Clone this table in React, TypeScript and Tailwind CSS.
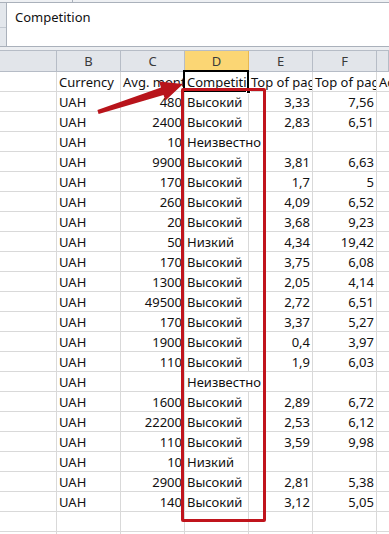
import React from 'react';

const rows: [string, string, string, string, string][] = [
  ['UAH', '480', 'Высокий', '3,33', '7,56'],
  ['UAH', '2400', 'Высокий', '2,83', '6,51'],
  ['UAH', '10', 'Неизвестно', '', ''],
  ['UAH', '9900', 'Высокий', '3,81', '6,63'],
  ['UAH', '170', 'Высокий', '1,7', '5'],
  ['UAH', '260', 'Высокий', '4,09', '6,52'],
  ['UAH', '20', 'Высокий', '3,68', '9,23'],
  ['UAH', '50', 'Низкий', '4,34', '19,42'],
  ['UAH', '170', 'Высокий', '3,75', '6,08'],
  ['UAH', '1300', 'Высокий', '2,05', '4,14'],
  ['UAH', '49500', 'Высокий', '2,72', '6,51'],
  ['UAH', '170', 'Высокий', '3,37', '5,27'],
  ['UAH', '1900', 'Высокий', '0,4', '3,97'],
  ['UAH', '110', 'Высокий', '1,9', '6,03'],
  ['UAH', '', 'Неизвестно', '', ''],
  ['UAH', '1600', 'Высокий', '2,89', '6,72'],
  ['UAH', '22200', 'Высокий', '2,53', '6,12'],
  ['UAH', '110', 'Высокий', '3,59', '9,98'],
  ['UAH', '10', 'Низкий', '', ''],
  ['UAH', '2900', 'Высокий', '2,81', '5,38'],
  ['UAH', '140', 'Высокий', '3,12', '5,05'],
  ['', '', '', '', ''],
  ['', '', '', '', ''],
];

const cell = 'h-5 shrink-0 border-b border-[#d9d9d9] whitespace-nowrap leading-[20px] px-[2px]';

const Row = ({ r, g = '' }: { r: string[]; g?: string }) => {
  // long text spills into the empty cell on its right, like Excel does
  const spill = r[2].length > 8 && r[3] === '';
  return (
    <div className="flex">
      <div className={`${cell} w-[57px] border-r overflow-hidden`} />
      <div className={`${cell} w-[64px] border-r overflow-hidden`}>{r[0]}</div>
      <div className={`${cell} w-[64px] border-r overflow-hidden text-right`}>{r[1]}</div>
      <div className={`${cell} w-[64px] ${spill ? 'overflow-visible border-r-0 w-[65px] relative z-10' : 'border-r overflow-hidden'}`}>
        {r[2]}
      </div>
      <div className={`${cell} ${spill ? 'w-[63px]' : 'w-[64px]'} border-r overflow-hidden text-right`}>{r[3]}</div>
      <div className={`${cell} w-[64px] border-r overflow-hidden text-right`}>{r[4]}</div>
      <div className={`${cell} flex-1 overflow-hidden`}>{g}</div>
    </div>
  );
};

const hd = 'h-[20px] shrink-0 border-r border-[#b6bcc6] text-center leading-[20px] text-[#3a3a3a]';

export default function App() {
  return (
    <div
      className="relative w-[389px] h-[534px] overflow-hidden bg-white text-[13px] text-[#111]"
      style={{ fontFamily: '"Noto Sans", "Open Sans", sans-serif' }}
    >
      {/* formula bar */}
      <div className="flex h-[3px] bg-[#eef0f3] border-b border-[#aab1bb]">
        <div className="w-[73px] border-r border-[#aab1bb]" />
      </div>
      <div className="flex h-[44px] border-b border-[#aab1bb]">
        <div className="w-[7px] bg-[#e3e7ec] border-r border-[#aab1bb] flex flex-col">
          <div className="h-[25px] border-b border-[#c3c9d1]" />
        </div>
        <div className="flex-1 pl-[8px] pt-[4px] leading-[20px]">Competition</div>
      </div>
      <div className="h-[3px] bg-[#eceef1]" />

      {/* column headers */}
      <div className="flex bg-[#e2e5ea] border-t border-b border-[#b6bcc6]">
        <div className={`${hd} w-[57px]`} />
        <div className={`${hd} w-[64px]`}>B</div>
        <div className={`${hd} w-[64px]`}>C</div>
        <div className={`${hd} w-[64px] bg-[#fbd674] border-r-[#e8b850]`}>D</div>
        <div className={`${hd} w-[64px]`}>E</div>
        <div className={`${hd} w-[64px]`}>F</div>
        <div className={`${hd} flex-1`} />
      </div>

      {/* sheet */}
      <div className="flex flex-col">
        <Row
          r={['Currency', 'Avg. monthly searches', 'Competition', 'Top of page bid (low range)', 'Top of page bid (high range)']}
          g="Ad impression share"
        />
        {rows.map((r, i) => (
          <Row key={i} r={r} />
        ))}
      </div>

      {/* active cell */}
      <div className="absolute left-[183px] top-[70px] w-[66px] h-[22px] border-2 border-black" />
      <div className="absolute left-[246px] top-[89px] w-[5px] h-[5px] bg-black border border-white" />

      {/* highlight box */}
      <div className="absolute left-[181px] top-[88px] w-[85px] h-[434px] border-[3px] border-[#c0141c] rounded-[2px]" />

      {/* arrow */}
      <svg className="absolute left-0 top-0" width="389" height="534" viewBox="0 0 389 534">
        <polygon
          points="97.4,110.1 161,87.5 159,81.5 183,84 165.5,100.5 163.5,95 98.6,113.9"
          fill="#b8141b"
        />
      </svg>
    </div>
  );
}
